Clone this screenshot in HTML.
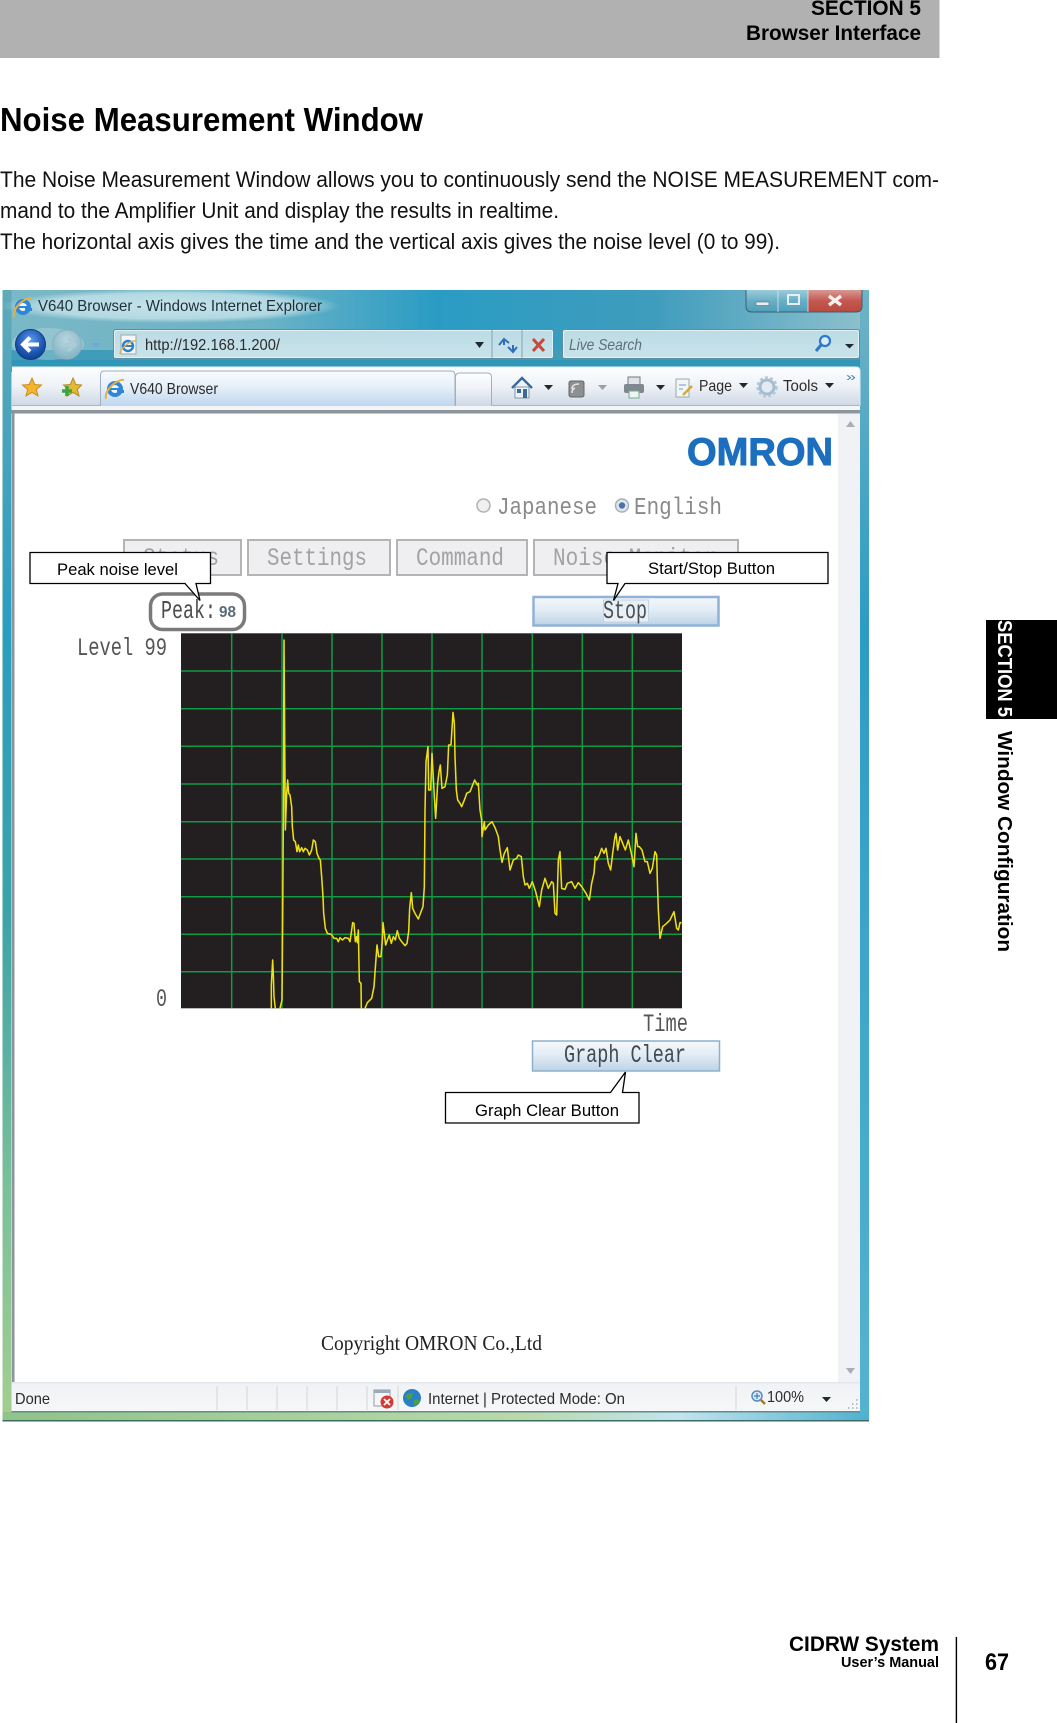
<!DOCTYPE html>
<html><head><meta charset="utf-8"><style>
html,body{margin:0;padding:0;background:#fff;width:1057px;height:1723px;overflow:hidden}
svg{display:block}
text{font-family:"Liberation Sans",sans-serif}
.b{font-weight:bold;fill:#000}
.m{font-family:"Liberation Mono",monospace}
.ui{fill:#2b2b2b}
</style></head><body>
<svg width="1057" height="1723" viewBox="0 0 1057 1723" xmlns="http://www.w3.org/2000/svg">
<defs>
<linearGradient id="tf" x1="0" x2="1" y1="0" y2="0"><stop offset="0" stop-color="#7ab8c6"/><stop offset=".3" stop-color="#6cb3c6"/><stop offset=".5" stop-color="#2a9cc4"/><stop offset=".75" stop-color="#3f9cbd"/><stop offset="1" stop-color="#8fc1cd"/></linearGradient>
<linearGradient id="lf" x1="0" x2="0" y1="0" y2="1"><stop offset="0" stop-color="#5fa9ba"/><stop offset=".3" stop-color="#2a9dc0"/><stop offset=".55" stop-color="#3ba3a8"/><stop offset=".8" stop-color="#7cc09a"/><stop offset="1" stop-color="#a3cf8e"/></linearGradient>
<linearGradient id="rf" x1="0" x2="0" y1="0" y2="1"><stop offset="0" stop-color="#6fb3c6"/><stop offset=".3" stop-color="#2c9cc4"/><stop offset="1" stop-color="#55b3d0"/></linearGradient>
<linearGradient id="bf" x1="0" x2="1" y1="0" y2="0"><stop offset="0" stop-color="#8fc388"/><stop offset=".6" stop-color="#b9d9a8"/><stop offset=".78" stop-color="#c2e4ef"/><stop offset="1" stop-color="#4fb0d0"/></linearGradient>
<linearGradient id="tb" x1="0" x2="0" y1="0" y2="1"><stop offset="0" stop-color="#fdfeff"/><stop offset=".5" stop-color="#eef2f7"/><stop offset="1" stop-color="#cdd7e4"/></linearGradient>
<linearGradient id="tab" x1="0" x2="0" y1="0" y2="1"><stop offset="0" stop-color="#f8fbfe"/><stop offset=".45" stop-color="#e6eff8"/><stop offset="1" stop-color="#bcd5ef"/></linearGradient>
<linearGradient id="btn" x1="0" x2="0" y1="0" y2="1"><stop offset="0" stop-color="#f4f8fb"/><stop offset=".45" stop-color="#e3edf5"/><stop offset="1" stop-color="#bcd3e6"/></linearGradient>
<linearGradient id="cl" x1="0" x2="0" y1="0" y2="1"><stop offset="0" stop-color="#d79a94"/><stop offset=".5" stop-color="#c4574f"/><stop offset="1" stop-color="#b84a40"/></linearGradient>
<linearGradient id="gl" x1="0" x2="0" y1="0" y2="1"><stop offset="0" stop-color="#9accd9"/><stop offset=".5" stop-color="#68aec6"/><stop offset="1" stop-color="#4f9fbb"/></linearGradient>
<radialGradient id="bk" cx=".5" cy=".35" r=".7"><stop offset="0" stop-color="#5f9de8"/><stop offset=".6" stop-color="#1f58b8"/><stop offset="1" stop-color="#0e3a86"/></radialGradient>
<radialGradient id="fw" cx=".5" cy=".35" r=".7"><stop offset="0" stop-color="#b8d8e2"/><stop offset="1" stop-color="#7fb0c2"/></radialGradient>
<radialGradient id="glow" cx=".5" cy=".5" r=".5"><stop offset="0" stop-color="#cfe8ee" stop-opacity=".9"/><stop offset=".75" stop-color="#cfe8ee" stop-opacity=".7"/><stop offset="1" stop-color="#cfe8ee" stop-opacity="0"/></radialGradient>
<linearGradient id="abar" x1="0" x2="0" y1="0" y2="1"><stop offset="0" stop-color="#bcdbe5"/><stop offset="1" stop-color="#c9e3ea"/></linearGradient>
<linearGradient id="st" x1="0" x2="0" y1="0" y2="1"><stop offset="0" stop-color="#f0f2f5"/><stop offset="1" stop-color="#f6f7f8"/></linearGradient>
</defs>

<!-- page header -->
<rect x="0" y="0" width="939.5" height="58" fill="#b1b1b1"/>
<text class="b" x="921" y="15" font-size="21" text-anchor="end" textLength="110" lengthAdjust="spacingAndGlyphs">SECTION 5</text>
<text class="b" x="921" y="40" font-size="21" text-anchor="end" textLength="175" lengthAdjust="spacingAndGlyphs">Browser Interface</text>

<text class="b" x="0" y="131" font-size="33" textLength="423" lengthAdjust="spacingAndGlyphs">Noise Measurement Window</text>

<text x="0" y="187" font-size="22" fill="#111" textLength="939" lengthAdjust="spacingAndGlyphs">The Noise Measurement Window allows you to continuously send the NOISE MEASUREMENT com-</text>
<text x="0" y="218" font-size="22" fill="#111" textLength="559" lengthAdjust="spacingAndGlyphs">mand to the Amplifier Unit and display the results in realtime.</text>
<text x="0" y="249" font-size="22" fill="#111" textLength="780" lengthAdjust="spacingAndGlyphs">The horizontal axis gives the time and the vertical axis gives the noise level (0 to 99).</text>

<!-- side tab -->
<rect x="986" y="620" width="71" height="99" fill="#000"/>
<text class="b" transform="translate(998,620) rotate(90)" font-size="20" style="fill:#fff" textLength="97" lengthAdjust="spacingAndGlyphs">SECTION 5</text>
<text class="b" transform="translate(998,731) rotate(90)" font-size="20" textLength="221" lengthAdjust="spacingAndGlyphs">Window Configuration</text>

<!-- footer -->
<text class="b" x="939" y="1651" font-size="21" text-anchor="end" textLength="150" lengthAdjust="spacingAndGlyphs">CIDRW System</text>
<text class="b" x="939" y="1667" font-size="14.500" text-anchor="end" textLength="98" lengthAdjust="spacingAndGlyphs">User’s Manual</text>
<rect x="955.7" y="1637" width="1.4" height="86" fill="#000"/>
<text class="b" x="985" y="1670" font-size="24" textLength="24" lengthAdjust="spacingAndGlyphs">67</text>

<!-- browser window frame -->
<rect x="2.500" y="290" width="866.500" height="60" fill="url(#tf)"/>
<rect x="2.500" y="350" width="866.500" height="22" fill="#3f9cbb"/>
<rect x="2.500" y="360" width="866.500" height="6" fill="#1f8fb4" opacity=".5"/>
<rect x="2.500" y="290" width="9" height="1131" fill="url(#lf)"/>
<rect x="860" y="290" width="9" height="1131" fill="url(#rf)"/>
<rect x="2.500" y="1412" width="866.500" height="9" fill="url(#bf)"/>
<rect x="2.500" y="1420" width="866.500" height="1.500" fill="#3d6c66"/>
<ellipse cx="170" cy="306" rx="170" ry="17" fill="url(#glow)"/>

<!-- title -->
<text x="38" y="311" font-size="16" fill="#1f2f38" textLength="284" lengthAdjust="spacingAndGlyphs">V640 Browser - Windows Internet Explorer</text>
<g id="ie">
<circle cx="23" cy="307" r="8" fill="#2f86d6"/><circle cx="23" cy="307" r="4" fill="#eef6fb"/><rect x="16" y="306" width="14" height="2" fill="#2f86d6"/><rect x="25" y="308" width="7" height="3" fill="#2f86d6"/>
<path d="M14 317C12 308 25 297 32 298" fill="none" stroke="#e0b24a" stroke-width="2"/>
</g>

<!-- window buttons -->
<path d="M746 290V306Q746 312 752 312H778V290Z" fill="url(#gl)"/>
<rect x="778" y="290" width="30" height="22" fill="url(#gl)"/>
<path d="M808 290V312H856Q862 312 862 306V290Z" fill="url(#cl)"/>
<path d="M746 290V306Q746 312 752 312H856Q862 312 862 306V290" fill="none" stroke="#3b5f70" stroke-width="1"/>
<path d="M778 290V312M808 290V312" stroke="#d8e8ee" stroke-width=".8"/>
<rect x="756" y="302" width="13" height="3.500" fill="#e6eef2" stroke="#52707c" stroke-width=".6"/>
<rect x="788" y="295" width="11" height="9" fill="none" stroke="#e6eef2" stroke-width="2"/>
<path d="M829 296L841 305M841 296L829 305" stroke="#f4f0ee" stroke-width="3.400"/>

<!-- nav buttons -->
<ellipse cx="48" cy="344" rx="36" ry="16" fill="#cfe4ea" opacity=".3"/>
<circle cx="30.500" cy="344.500" r="15" fill="url(#bk)" stroke="#123c7c" stroke-width="1"/>
<path d="M23 344.500H39M30 337.500L23 344.500L30 351.500" fill="none" stroke="#fff" stroke-width="4"/>
<circle cx="67" cy="344.500" r="14.500" fill="url(#fw)" stroke="#8fb0bc" stroke-width="1.200"/>
<path d="M75 344.500H60M68 338L75 344.500L68 351" fill="none" stroke="#a9ccd6" stroke-width="3.500"/>
<path d="M91 343H101L96 348Z" fill="#6aa9dc"/>

<!-- address -->
<rect x="113.500" y="329.500" width="440" height="29" rx="2" fill="url(#abar)" stroke="#5f8ea0"/>
<rect x="114.500" y="330.500" width="438" height="27" rx="2" fill="none" stroke="#e2f0f4"/>
<path d="M492 330V358M522 330V358" stroke="#7fa6b4"/>
<rect x="121" y="335" width="15" height="19" fill="#f4f6f8" stroke="#9aa"/>
<circle cx="128" cy="346" r="5" fill="none" stroke="#2f7fd0" stroke-width="2.400"/><path d="M123 346H133" stroke="#2f7fd0" stroke-width="2"/>
<path d="M120 354C120 349 130 340 136 341" fill="none" stroke="#e0b24a" stroke-width="1.400"/>
<text x="145" y="350" font-size="16" class="ui" textLength="135" lengthAdjust="spacingAndGlyphs">http://192.168.1.200/</text>
<path d="M475 342H484L479.500 348Z" fill="#1f2a30"/>
<path d="M499 345L504 339L509 343M504 339V345M508 347L513 352L517 347M513 352V345" fill="none" stroke="#2e6fb8" stroke-width="2"/>
<path d="M533 339L544 351M544 339L533 351" stroke="#c8463a" stroke-width="3"/>

<!-- search -->
<rect x="562.500" y="329.500" width="297" height="29" rx="2" fill="url(#abar)" stroke="#5f8ea0"/>
<rect x="563.500" y="330.500" width="295" height="27" rx="2" fill="none" stroke="#e2f0f4"/>
<text x="569" y="350" font-size="16" font-style="italic" fill="#5d6f78" textLength="73" lengthAdjust="spacingAndGlyphs">Live Search</text>
<circle cx="825" cy="341" r="5" fill="#d8ecf6" stroke="#2e79c8" stroke-width="2.200"/><path d="M821 345L816 351" stroke="#2e79c8" stroke-width="3"/>
<path d="M845 344H854L849.500 348.500Z" fill="#1f2a30"/>

<!-- toolbar -->
<path d="M12 367H856Q860 367 860 371V406H12Z" fill="url(#tb)"/>
<path d="M12 367H856Q860 367 860 371V406" fill="none" stroke="#dfeaf0"/>
<path d="M32 378L34.700 384.500L41.500 385L36.300 389.500L38 396L32 392.500L26 396L27.700 389.500L22.500 385L29.300 384.500Z" fill="#f4b52e" stroke="#c98d1c"/>
<path d="M73 378L75.700 384.500L81.500 385L77.300 389.500L79 396L73 392.500L67 396L68.700 389.500L63.500 385L70.300 384.500Z" fill="#e6b83a" stroke="#b48a1c"/>
<path d="M67 386V396M62 391H72" stroke="#3ca53c" stroke-width="3.600"/>
<!-- tab -->
<path d="M100.500 407V375Q100.500 371 104.500 371H451Q455 371 455 375V407" fill="url(#tab)" stroke="#9fb0c0"/>
<path d="M455.500 406V377Q455.500 373 459.500 373H487Q491.500 373 491.500 377V406" fill="url(#tb)" stroke="#9fb0c0"/>
<path d="M12 405.500H100M491 405.500H860" stroke="#a9b6c4"/>
<circle cx="115" cy="389" r="8" fill="#2f86d6"/><circle cx="115" cy="389" r="4" fill="#eef6fb"/><rect x="108" y="388" width="14" height="2" fill="#2f86d6"/><rect x="117" y="390" width="7" height="3" fill="#2f86d6"/>
<path d="M106 399C104 390 117 379 124 380" fill="none" stroke="#e0b24a" stroke-width="2"/>
<text x="130" y="394" font-size="16" class="ui" textLength="88" lengthAdjust="spacingAndGlyphs">V640 Browser</text>
<!-- home -->
<path d="M512 388L522 378L532 388" fill="none" stroke="#3a6a9c" stroke-width="2.400"/><rect x="515" y="387" width="14" height="11" fill="#eef3f6" stroke="#7f97a8"/><rect x="523" y="389" width="4" height="9" fill="#3a6a9c"/><rect x="517" y="389" width="4" height="4" fill="#3a6a9c"/>
<path d="M544 385H553L548.500 390Z" fill="#1f2a30"/>
<rect x="569" y="381" width="15" height="16" rx="2" fill="#8b9090" stroke="#666"/><path d="M572 393Q572 389 575 388M572 389Q572 384 579 384" fill="none" stroke="#e4e4e4" stroke-width="1.600"/>
<path d="M598 385H607L602.500 390Z" fill="#98a2ac"/>
<rect x="628" y="377" width="12" height="8" fill="#dfe3e7" stroke="#777"/><rect x="624" y="384" width="20" height="9" rx="2" fill="#7f8890"/><rect x="629" y="391" width="10" height="7" fill="#eef4f6" stroke="#7a8"/>
<path d="M656 385H665L660.500 390Z" fill="#1f2a30"/>
<rect x="676" y="379" width="13" height="18" fill="#f3f6f8" stroke="#9aa"/><path d="M679 385H686M679 389H683" stroke="#6a9ac8"/><path d="M683 395L692 386" stroke="#d2a93e" stroke-width="2.400"/>
<text x="699" y="391" font-size="16" class="ui" textLength="33" lengthAdjust="spacingAndGlyphs">Page</text>
<path d="M739 383H748L743.500 388Z" fill="#1f2a30"/>
<circle cx="767" cy="387" r="7" fill="#e4ecf2" stroke="#a5bdd2" stroke-width="3"/><circle cx="767" cy="387" r="9.500" fill="none" stroke="#b5c8da" stroke-width="2.400" stroke-dasharray="3 2.300"/>
<text x="783" y="391" font-size="16" class="ui" textLength="35" lengthAdjust="spacingAndGlyphs">Tools</text>
<path d="M825 383H834L829.500 388Z" fill="#1f2a30"/>
<text x="846" y="381" font-size="12" fill="#4a7fb8" textLength="10" lengthAdjust="spacingAndGlyphs">»</text>

<!-- content -->
<rect x="11.500" y="406" width="848.500" height="978" fill="#f3f5f7"/>
<rect x="11.500" y="410" width="848.500" height="3.500" fill="#8d959c"/>
<rect x="12" y="413" width="2.500" height="971" fill="#8d959c"/>
<rect x="14.500" y="414" width="823.500" height="970" fill="#fff"/>
<rect x="838" y="414" width="22" height="970" fill="#f0f2f5"/>
<path d="M846 427H855L850.500 421Z" fill="#a9aeb4"/>
<path d="M846 1368H855L850.500 1374Z" fill="#a9aeb4"/>

<!-- omron -->
<text x="687" y="465" font-size="39" font-weight="bold" fill="#1c6fbe" textLength="146" lengthAdjust="spacingAndGlyphs" stroke="#1c6fbe" stroke-width="1">OMRON</text>

<!-- radios -->
<circle cx="483.500" cy="505.500" r="6.500" fill="#f0f0f0" stroke="#b0b0b0" stroke-width="1.500"/>
<text class="m" x="497" y="514" font-size="24" fill="#8a8a8a" textLength="100" lengthAdjust="spacingAndGlyphs">Japanese</text>
<circle cx="622" cy="505.500" r="6.500" fill="#dfe6ee" stroke="#a6b0bc" stroke-width="1.500"/><circle cx="622" cy="505.500" r="3.200" fill="#4a74a8"/>
<text class="m" x="634" y="514" font-size="24" fill="#8a8a8a" textLength="88" lengthAdjust="spacingAndGlyphs">English</text>

<!-- tabs -->
<g fill="#efeff1" stroke="#b4b4b4" stroke-width="2">
<rect x="124" y="540" width="117" height="35"/><rect x="248" y="540" width="142" height="35"/><rect x="397" y="540" width="130" height="35"/><rect x="534" y="540" width="204" height="35"/>
</g>
<text class="m" x="143" y="565" font-size="25" fill="#a2a2a6" textLength="76" lengthAdjust="spacingAndGlyphs">Status</text>
<text class="m" x="267" y="565" font-size="25" fill="#a2a2a6" textLength="100" lengthAdjust="spacingAndGlyphs">Settings</text>
<text class="m" x="416" y="565" font-size="25" fill="#a2a2a6" textLength="88" lengthAdjust="spacingAndGlyphs">Command</text>
<text class="m" x="553" y="565" font-size="25" fill="#a2a2a6" textLength="164" lengthAdjust="spacingAndGlyphs">Noise Monitor</text>

<!-- peak -->
<rect x="150.500" y="594" width="94" height="35.500" rx="12" fill="#fff" stroke="#7a7a7a" stroke-width="3.500"/>
<text class="m" x="161" y="618" font-size="26" fill="#4d4d4d" textLength="55" lengthAdjust="spacingAndGlyphs">Peak:</text>
<text x="219" y="617" font-size="16" font-weight="bold" fill="#5a6a7a" textLength="17" lengthAdjust="spacingAndGlyphs">98</text>

<!-- stop -->
<rect x="533.500" y="597" width="185" height="28.500" fill="url(#btn)" stroke="#8fb2d6" stroke-width="2.500"/>
<rect x="603.500" y="600" width="45" height="22" fill="#e8f0f6" stroke="#c2d4e4"/>
<text class="m" x="603" y="618" font-size="26" fill="#4a4f55" textLength="44" lengthAdjust="spacingAndGlyphs">Stop</text>

<!-- level labels -->
<text class="m" x="77" y="655" font-size="25" fill="#555" textLength="90" lengthAdjust="spacingAndGlyphs">Level 99</text>
<text class="m" x="156" y="1006" font-size="25" fill="#555" textLength="11" lengthAdjust="spacingAndGlyphs">0</text>
<text class="m" x="643" y="1031" font-size="25" fill="#555" textLength="45" lengthAdjust="spacingAndGlyphs">Time</text>

<!-- chart -->
<rect x="181" y="633.300" width="501" height="375" fill="#231f20"/>
<g stroke="#0f9a44" stroke-width="1.500">
<path d="M231.700 633.300V1008.300M282 633.300V1008.300M332 633.300V1008.300M382 633.300V1008.300M432 633.300V1008.300M482 633.300V1008.300M532.300 633.300V1008.300M582.300 633.300V1008.300M632.300 633.300V1008.300"/>
<path d="M181 671H682M181 708.700H682M181 746.300H682M181 784H682M181 821.700H682M181 859H682M181 896.700H682M181 934.300H682M181 971.700H682"/>
</g>
<g transform="translate(170,620) scale(.33333)">
<polyline fill="none" stroke="#ece012" stroke-width="4.600" stroke-linejoin="round" points="304,1165 304,1095 308,1020 310,1065 312,1130 316,1165"/>
<polyline fill="none" stroke="#ece012" stroke-width="4.600" stroke-linejoin="round" points="330,1165 336,1140 338,900 340,590 342,60 344,345 346,630 350,520 353,480 356,520 360,525 365,560 367,620 371,660 376,665 381,695 385,675 389,695 395,683 400,695 405,685 412,690 418,705 425,690 430,660 436,665 441,700 447,715 451,720 455,770 459,830 461,880 466,925 472,940 484,943 492,955 500,955 505,965 510,953 517,960 525,953 535,955 540,965 545,930 548,908 552,910 556,965 560,950 562,968 565,930 568,1085 573,1090 574,1165"/>
<polyline fill="none" stroke="#ece012" stroke-width="4.600" stroke-linejoin="round" points="585,1165 592,1148 605,1135 612,1100 617,1030 621,975 626,1010 633,1010 637,960 639,908 643,940 647,975 652,960 658,945 664,970 670,950 676,960 682,932 688,955 695,965 705,977 711,970 716,935 719,865 724,818 728,865 735,880 745,897 755,870 759,860 763,800 765,575 768,425 774,380 776,510 782,510 786,400 793,530 797,595 803,490 807,455 811,435 816,505 825,500 832,465 836,375 843,375 847,310 849,277 853,310 855,410 859,510 863,540 870,550 875,560 885,535 890,520 900,515 906,500 914,480 922,495 925,490 930,570 935,600 936,650 943,605 945,630 955,615 966,605 976,625 985,650 990,690 996,727 1003,700 1012,683 1020,750 1030,720 1040,715 1045,705 1054,710 1060,770 1065,795 1072,790 1078,805 1087,785 1097,815 1108,860 1115,810 1125,775 1135,805 1145,785 1150,790 1155,880 1160,885 1165,720 1170,695 1175,805 1185,808 1192,790 1205,785 1215,805 1225,788 1235,800 1248,820 1258,840 1265,790 1272,760 1276,710 1280,720 1288,705 1295,685 1302,700 1308,685 1315,730 1322,750 1328,700 1335,650 1338,640 1343,690 1350,650 1358,670 1366,690 1375,660 1385,705 1392,740 1398,640 1403,680 1408,680 1416,690 1425,725 1432,725 1440,760 1447,745 1455,695 1460,705 1462,780 1465,870 1470,955 1478,920 1490,910 1500,900 1512,875 1520,925 1525,930 1530,908 1535,908"/>
</g>

<!-- graph clear -->
<rect x="532.500" y="1041" width="187" height="30" fill="url(#btn)" stroke="#8fb0cc" stroke-width="1.500"/>
<text class="m" x="564" y="1062" font-size="25" fill="#3f4a52" textLength="122" lengthAdjust="spacingAndGlyphs">Graph Clear</text>

<!-- callouts -->
<path d="M30 552.500H210.500V583.500H196L200 600.500L185 583.500H30Z" fill="#fff" stroke="#000" stroke-width="1.300"/>
<text x="57" y="575" font-size="16.500" fill="#000" textLength="121" lengthAdjust="spacingAndGlyphs">Peak noise level</text>
<path d="M607 552.500H828V583.500H625L613.500 600.500L618 583.500H607Z" fill="#fff" stroke="#000" stroke-width="1.300"/>
<text x="648" y="574" font-size="16.500" fill="#000" textLength="127" lengthAdjust="spacingAndGlyphs">Start/Stop Button</text>
<path d="M445.500 1092.500H610.500L625.500 1072L622.500 1092.500H639V1123H445.500Z" fill="#fff" stroke="#000" stroke-width="1.300"/>
<text x="475" y="1116" font-size="16.500" fill="#000" textLength="144" lengthAdjust="spacingAndGlyphs">Graph Clear Button</text>

<!-- copyright -->
<text x="321" y="1350" font-size="21" fill="#222" style='font-family:"Liberation Serif",serif' textLength="221" lengthAdjust="spacingAndGlyphs">Copyright OMRON Co.,Ltd</text>

<!-- status bar -->
<rect x="11.500" y="1383" width="848.500" height="29" fill="url(#st)"/>
<rect x="11.500" y="1382" width="848.500" height="1.500" fill="#e2e6ea"/>
<rect x="11.500" y="1411" width="848.500" height="1.500" fill="#5f8e88"/>
<path d="M217 1386V1410M247 1386V1410M277 1386V1410M307 1386V1410M337 1386V1410M367 1386V1410M398 1386V1410M736 1386V1410" stroke="#d2d6da"/>
<text x="15" y="1404" font-size="16" class="ui" textLength="35" lengthAdjust="spacingAndGlyphs">Done</text>
<rect x="374" y="1390" width="16" height="16" fill="#f4f6f8" stroke="#99a"/><rect x="374" y="1390" width="16" height="3" fill="#9ab"/>
<circle cx="387" cy="1402" r="6.500" fill="#d23a33"/><path d="M384 1399L390 1405M390 1399L384 1405" stroke="#fff" stroke-width="1.800"/>
<circle cx="412" cy="1398" r="9" fill="#2a7fc8"/><path d="M405 1396Q410 1391 413 1394Q412 1399 408 1400ZM414 1400Q419 1398 420 1402Q416 1406 414 1405Z" fill="#4aa04a"/>
<text x="428" y="1404" font-size="16" class="ui" textLength="197" lengthAdjust="spacingAndGlyphs">Internet | Protected Mode: On</text>
<circle cx="757" cy="1396" r="5" fill="#d8e8f6" stroke="#5a8ac0" stroke-width="1.500"/><path d="M757 1393V1399M754 1396H760" stroke="#2a6ab0"/><path d="M761 1400L765 1404" stroke="#a87a2c" stroke-width="2.500"/>
<text x="767" y="1402" font-size="16" class="ui" textLength="37" lengthAdjust="spacingAndGlyphs">100%</text>
<path d="M822 1397H831L826.500 1402Z" fill="#1f2a30"/>
<path d="M856 1408h1.500M852 1408h1.500M848 1408h1.500M856 1404h1.500M852 1404h1.500M856 1400h1.500" stroke="#aab" stroke-width="1.500"/>
</svg>
</body></html>
